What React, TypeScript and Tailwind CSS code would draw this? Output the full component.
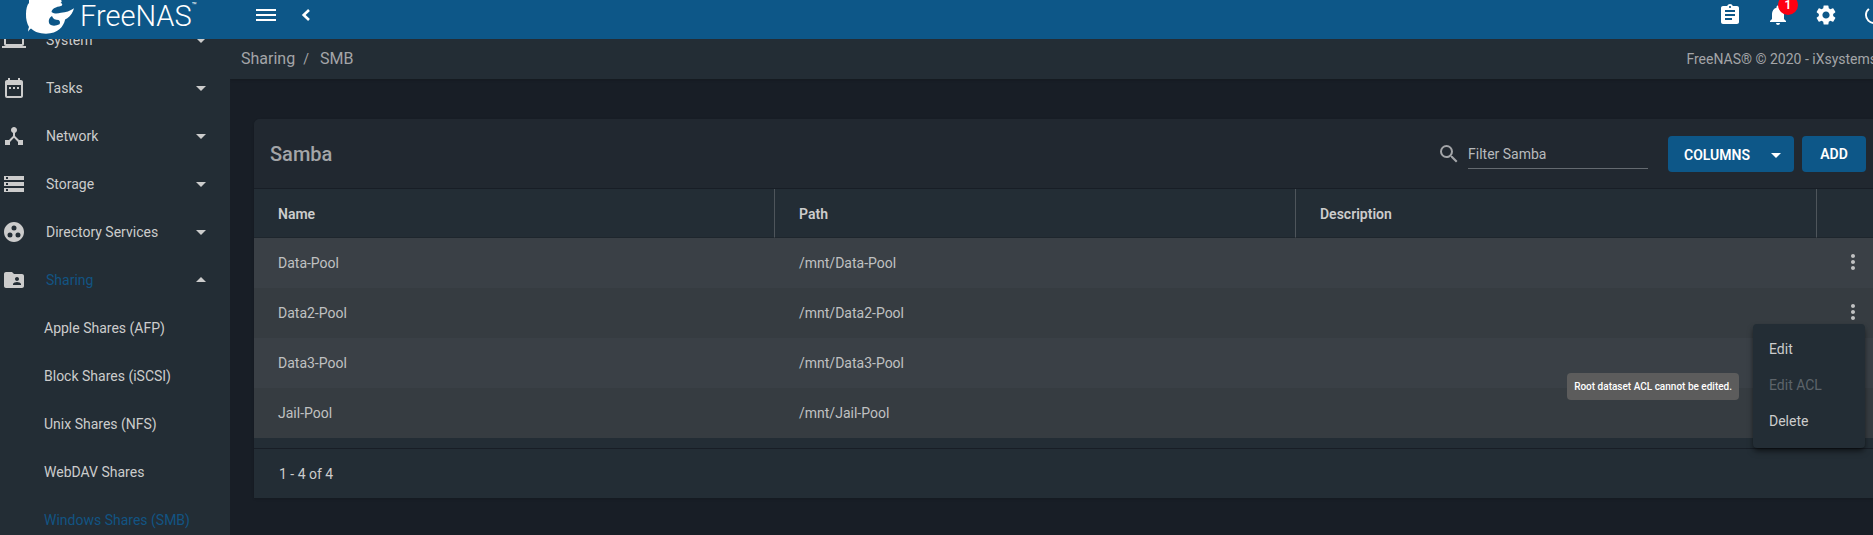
import type { ReactNode } from 'react';
import {
  MdArrowDropDown,
  MdArrowDropUp,
  MdAssignment,
  MdDateRange,
  MdDeviceHub,
  MdFolderShared,
  MdGroupWork,
  MdLaptop,
  MdMoreVert,
  MdNotifications,
  MdPowerSettingsNew,
  MdSearch,
  MdSettings,
  MdStorage,
} from 'react-icons/md';

type NavItem = { label: string; icon: ReactNode; open?: boolean };

const navItems: NavItem[] = [
  { label: 'System', icon: <MdLaptop /> },
  { label: 'Tasks', icon: <MdDateRange /> },
  { label: 'Network', icon: <MdDeviceHub /> },
  { label: 'Storage', icon: <MdStorage /> },
  { label: 'Directory Services', icon: <MdGroupWork /> },
  { label: 'Sharing', icon: <MdFolderShared />, open: true },
];

const sharingLinks = [
  'Apple Shares (AFP)',
  'Block Shares (iSCSI)',
  'Unix Shares (NFS)',
  'WebDAV Shares',
  'Windows Shares (SMB)',
];

const shares = ['Data-Pool', 'Data2-Pool', 'Data3-Pool', 'Jail-Pool'];

function Logo() {
  return (
    <a href="#" className="flex h-full w-[230px] shrink-0 items-start pl-6 text-white">
      <svg viewBox="0 0 52 36" className="h-9 w-[52px] shrink-0" fill="currentColor" aria-hidden="true">
        <path d="M5 0 H37 C38 1 38 2 36.500 3 C39 3.500 38.500 5.500 37 6 C32 7 28 8.500 27.500 12 C31 14.500 34 13.500 37 12.800 C42 12.500 46 11 50 8.300 C49 12 47 16 43 18.500 C42 18.700 41.500 19 41 20 C39.500 26.500 34 33.500 22 33.700 C15 33.700 10 31.500 7 28.500 C6 29 5 30 4.300 31.700 C4 30 4.300 28.500 5 27 C3 23.500 1.800 19 2 14 C2 9 3 5 5 3 Z" />
        <path d="M28 16 C25 17.500 24 21 25.500 24 C28 26.500 32 26 35.500 24.300 C36.500 22.500 36 20.500 34.500 20 C31.500 20 29 19 28 16 Z" fill="#0d5788" />
      </svg>
      <span className="ml-1 text-[29px] font-light leading-8">FreeNAS</span>
      <span className="pt-0.5 text-[8px] leading-none">™</span>
    </a>
  );
}

function Header() {
  return (
    <header className="flex h-[39px] shrink-0 bg-[#0d5788] text-white">
      <Logo />
      <div className="flex flex-1 items-center pb-[9px] pl-6">
        <button aria-label="Toggle menu" className="p-0.5">
          <svg viewBox="0 0 20 12" className="h-3 w-5" fill="currentColor">
            <path d="M0 0h20v2H0zM0 5h20v2H0zM0 10h20v2H0z" />
          </svg>
        </button>
        <button aria-label="Collapse sidebar" className="ml-4">
          <svg viewBox="0 0 24 24" className="size-6" fill="none" stroke="currentColor" strokeWidth="2.600">
            <path d="M15 7 L9.700 12 L15 17" />
          </svg>
        </button>
      </div>
      <div className="-mr-[13px] flex shrink-0 items-center gap-6 pb-[9px] text-2xl">
        <button aria-label="Task manager">
          <MdAssignment />
        </button>
        <button aria-label="Notifications" className="relative">
          <MdNotifications />
          <span className="absolute -top-2 left-3 flex size-5 items-center justify-center rounded-full bg-[#ff0012] text-xs font-semibold leading-none">
            1
          </span>
        </button>
        <button aria-label="Settings">
          <MdSettings />
        </button>
        <button aria-label="Power">
          <MdPowerSettingsNew />
        </button>
      </div>
    </header>
  );
}

function Sidebar() {
  return (
    <nav className="w-[230px] shrink-0 overflow-hidden bg-[#232d35]">
      <ul className="-mt-[23px]">
        {navItems.map((item) => (
          <li key={item.label}>
            <button className="flex h-12 w-full items-center pl-0.5 pr-[17px] text-left">
              <span className="text-2xl text-[#cccccc]">{item.icon}</span>
              <span className={item.open ? 'ml-5 flex-1 text-[#125483]' : 'ml-5 flex-1'}>{item.label}</span>
              <span className="text-2xl">{item.open ? <MdArrowDropUp /> : <MdArrowDropDown />}</span>
            </button>
          </li>
        ))}
        {sharingLinks.map((label) => (
          <li key={label}>
            <a
              href="#"
              className={
                label.startsWith('Windows')
                  ? 'flex h-12 items-center pl-11 text-[#125483]'
                  : 'flex h-12 items-center pl-11'
              }
            >
              {label}
            </a>
          </li>
        ))}
      </ul>
    </nav>
  );
}

function ActionMenu() {
  return (
    <div className="absolute right-2 top-[135px] z-10 flex items-start whitespace-nowrap">
      <div
        role="tooltip"
        className="mr-3.5 mt-[49px] rounded bg-[#5c5c5c] px-[7px] py-1.5 text-[10px] font-medium leading-[15px] text-white"
      >
        Root dataset ACL cannot be edited.
      </div>
      <div role="menu" className="flex w-28 flex-col rounded bg-[#232d35] pb-[9px] pt-[7px] shadow-md shadow-black/50">
        <button role="menuitem" className="h-9 px-4 text-left">
          Edit
        </button>
        <button role="menuitem" disabled className="h-9 px-4 text-left text-[#5d646a]">
          Edit ACL
        </button>
        <button role="menuitem" className="h-9 px-4 text-left">
          Delete
        </button>
      </div>
    </div>
  );
}

function ShareTable() {
  return (
    <div className="relative">
      <table className="w-full table-fixed border-separate border-spacing-0 text-left">
        <colgroup>
          <col />
          <col />
          <col />
          <col className="w-14" />
        </colgroup>
        <thead>
          <tr className="h-[49px] *:border-b *:border-b-[#1e262d]">
            <th className="border-r border-r-[#4e555b] px-6 pt-0.5 font-semibold">Name</th>
            <th className="border-r border-r-[#4e555b] px-6 pt-0.5 font-semibold">Path</th>
            <th className="border-r border-r-[#4e555b] px-6 pt-0.5 font-semibold">Description</th>
            <th aria-label="Actions" />
          </tr>
        </thead>
        <tbody>
          {shares.map((name) => (
            <tr key={name} className="h-[50px] bg-[#3a4046] text-[#c0c1c2] even:bg-[#363c41]">
              <td className="px-6">{name}</td>
              <td className="px-6">/mnt/{name}</td>
              <td />
              <td className="pb-0.5">
                <button aria-label={`Actions for ${name}`} className="ml-6 block text-2xl">
                  <MdMoreVert />
                </button>
              </td>
            </tr>
          ))}
        </tbody>
      </table>
      <ActionMenu />
    </div>
  );
}

export default function App() {
  return (
    <div className="flex h-screen flex-col overflow-hidden bg-[#181e26] font-['Roboto',sans-serif] text-sm text-[#cccccc]">
      <Header />
      <div className="flex min-h-0 flex-1">
        <Sidebar />
        <div className="min-w-0 flex-1 overflow-hidden">
          <div className="flex h-10 items-center justify-between bg-[#232d35] pb-px pl-[11px] text-[#a3a5a8] shadow">
            <div className="flex items-center text-base">
              <a href="#">Sharing</a>
              <span className="mx-2 text-sm">/</span>
              <span className="ml-[3px]">SMB</span>
            </div>
            <div className="-mr-1 whitespace-nowrap">FreeNAS® © 2020 - iXsystems</div>
          </div>
          <main className="pl-6 pt-10">
            <section className="rounded-tl-md bg-[#232d35] shadow">
              <div className="flex h-[70px] items-center rounded-tl-md border-b border-[#181e26] bg-[#212830] pl-4 pr-[7px]">
                <h1 className="flex-1 text-xl font-medium text-[#a3a5a8]">Samba</h1>
                <MdSearch className="text-2xl text-[#a3a5a8]" />
                <input
                  aria-label="Filter Samba"
                  placeholder="Filter Samba"
                  className="ml-[7px] h-[30px] w-[180px] border-b border-[#646a70] bg-transparent pt-0.5 placeholder:text-[#b8babc]"
                />
                <button className="ml-5 flex h-9 w-[126px] items-center justify-between rounded bg-[#0d5788] pl-4 pr-1.5 pt-0.5 font-semibold text-white">
                  COLUMNS
                  <MdArrowDropDown className="text-2xl" />
                </button>
                <button className="ml-2 h-9 w-16 rounded bg-[#0d5788] font-semibold text-white">ADD</button>
              </div>
              <ShareTable />
              <div className="mt-2.5 flex h-[50px] items-center border-t border-[#181e26] pl-[25px]">1 - 4 of 4</div>
            </section>
          </main>
        </div>
      </div>
    </div>
  );
}
